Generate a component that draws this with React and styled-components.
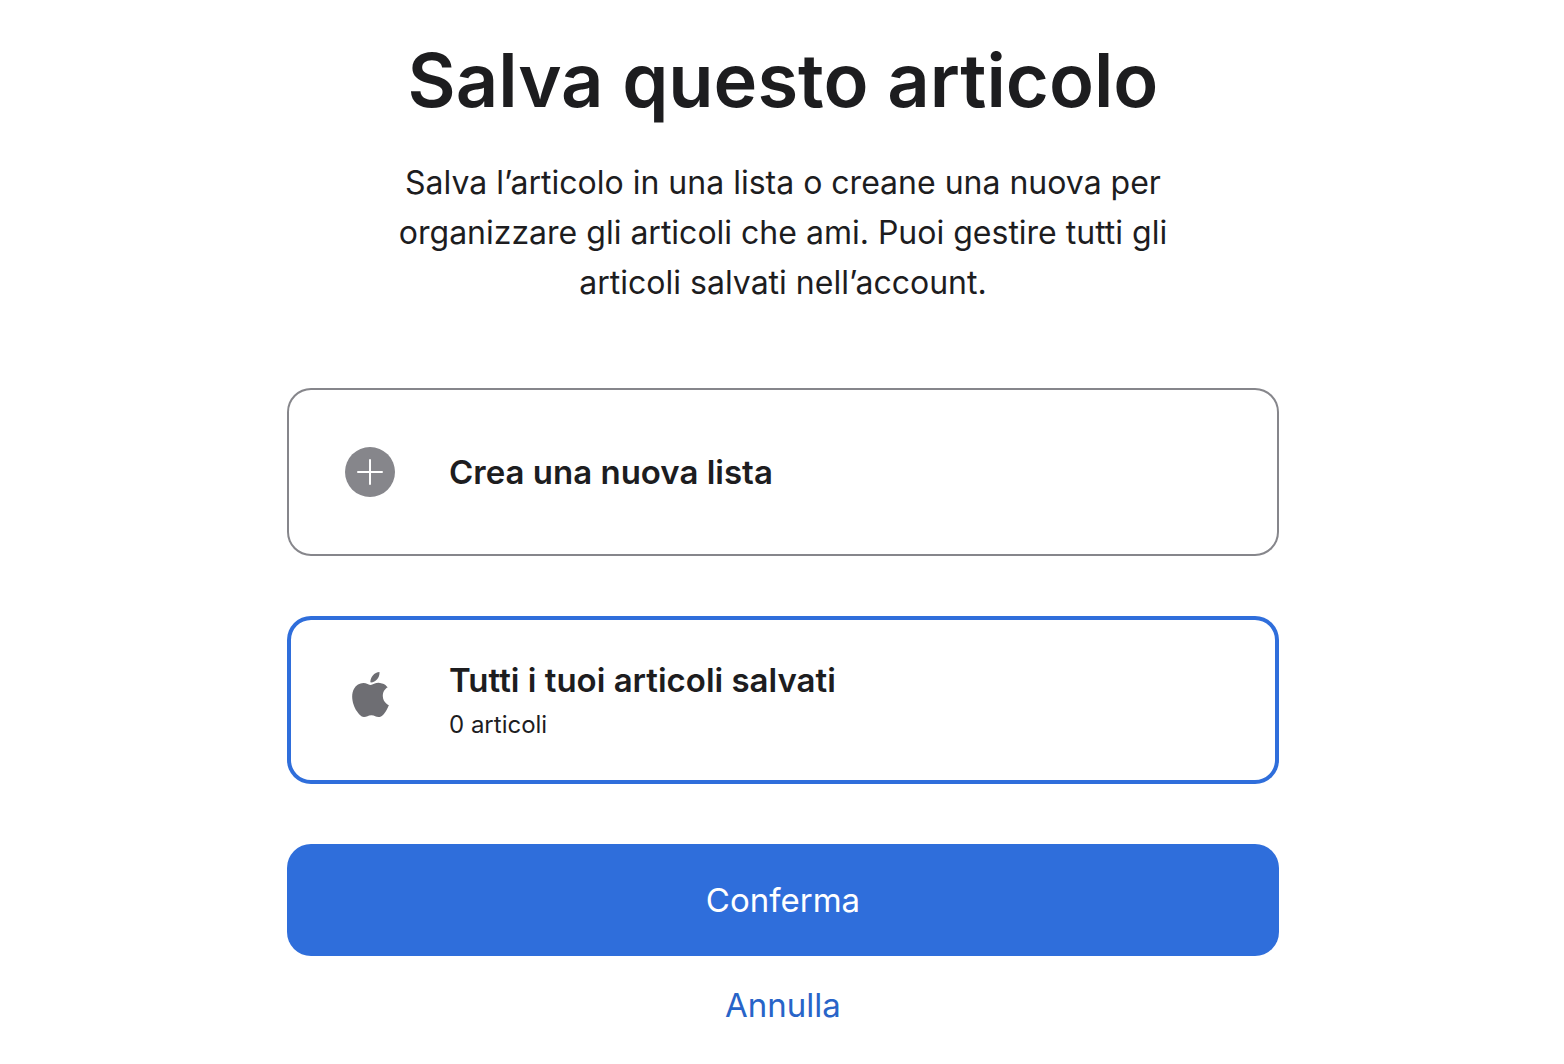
import React, { useState } from "react";
import styled, { createGlobalStyle } from "styled-components";
import { SiApple } from "react-icons/si";

export default function App() {
  const [selected, setSelected] = useState("all");

  return (
    <Page>
      <GlobalStyle />
      <Title>Salva questo articolo</Title>
      <Intro>
        Salva l’articolo in una lista o creane una nuova per organizzare gli
        articoli che ami. Puoi gestire tutti gli articoli salvati nell’account.
      </Intro>
      <Form onSubmit={(e) => e.preventDefault()}>
        <ListCard
          type="button"
          $selected={selected === "new"}
          onClick={() => setSelected("new")}
        >
          <IconSlot>
            <PlusIcon />
          </IconSlot>
          <CardTitle>Crea una nuova lista</CardTitle>
        </ListCard>
        <ListCard
          type="button"
          $selected={selected === "all"}
          onClick={() => setSelected("all")}
        >
          <IconSlot $raised>
            <SiApple size={45} color="#6e6e73" aria-hidden="true" />
          </IconSlot>
          <CardText>
            <CardTitle>Tutti i tuoi articoli salvati</CardTitle>
            <CardCount>0 articoli</CardCount>
          </CardText>
        </ListCard>
        <ConfirmButton type="submit">Conferma</ConfirmButton>
      </Form>
      <CancelLink href="#annulla">Annulla</CancelLink>
    </Page>
  );
}

function PlusIcon() {
  return (
    <svg width="50" height="50" viewBox="0 0 50 50" aria-hidden="true">
      <circle cx="25" cy="25" r="25" fill="#86868b" />
      <path
        d="M25 13v24M13 25h24"
        stroke="#fff"
        strokeWidth="2"
        strokeLinecap="round"
      />
    </svg>
  );
}

const GlobalStyle = createGlobalStyle`
  * {
    box-sizing: border-box;
  }
  body {
    margin: 0;
    background: #fff;
    color: #1d1d1f;
    font-family: Inter, "Liberation Sans", sans-serif;
  }
`;

const Page = styled.main`
  display: flex;
  flex-direction: column;
  align-items: center;
  padding: 36px 24px 36px 26px;
`;

const Title = styled.h1`
  margin: 0;
  font-weight: 600;
  font-size: 74px;
  line-height: 88px;
  text-align: center;
`;

const Intro = styled.p`
  max-width: 800px;
  margin: 34px 0 80px;
  font-size: 32px;
  line-height: 50px;
  text-align: center;
`;

const Form = styled.form`
  display: flex;
  flex-direction: column;
  gap: 60px;
  width: 100%;
  max-width: 992px;
`;

const ListCard = styled.button`
  display: flex;
  align-items: center;
  gap: 54px;
  min-height: 168px;
  padding: 0 58px;
  border: 0;
  border-radius: 24px;
  box-shadow: inset 0 0 0
    ${({ $selected }) => ($selected ? "4px #2f6edb" : "2px #86868b")};
  background: #fff;
  color: inherit;
  font: inherit;
  text-align: left;
  cursor: pointer;
`;

const IconSlot = styled.span`
  display: flex;
  flex-shrink: 0;
  justify-content: center;
  width: 50px;
  padding-bottom: ${({ $raised }) => ($raised ? "11px" : "0")};
`;

const CardText = styled.span`
  display: flex;
  flex-direction: column;
  gap: 4px;
  padding-bottom: 4px;
`;

const CardTitle = styled.span`
  font-weight: 600;
  font-size: 33px;
  line-height: 50px;
`;

const CardCount = styled.span`
  font-size: 24px;
  line-height: 32px;
`;

const ConfirmButton = styled.button`
  min-height: 112px;
  border: 0;
  border-radius: 24px;
  background: #2f6edb;
  color: #fff;
  font-family: inherit;
  font-size: 33px;
  line-height: 50px;
  cursor: pointer;
`;

const CancelLink = styled.a`
  margin-top: 24px;
  color: #2864c8;
  font-size: 33px;
  line-height: 50px;
  text-decoration: none;
`;
